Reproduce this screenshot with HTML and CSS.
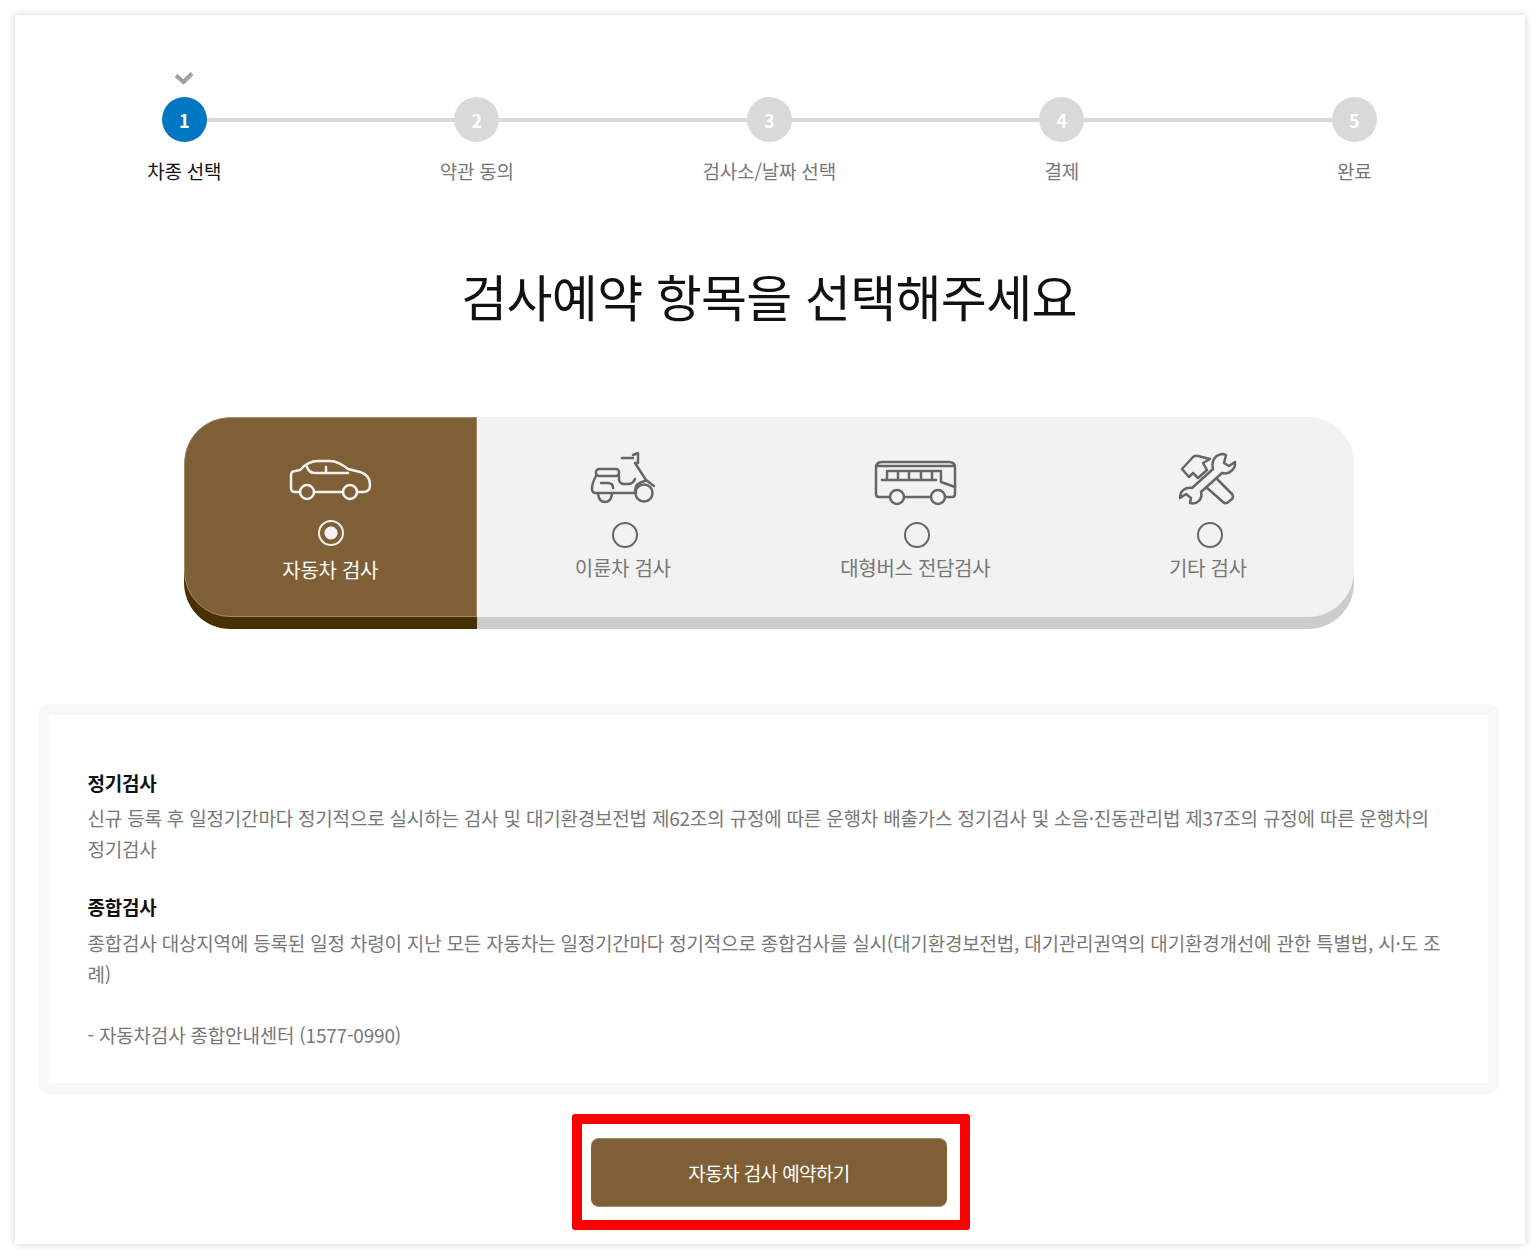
FILE: index.html
```html
<!DOCTYPE html>
<html lang="ko">
<head>
<meta charset="utf-8">
<title>검사예약</title>
<link rel="stylesheet" href="styles.css">
</head>
<body>
<main class="panel">
  <ol class="steps">
    <li class="step current">
      <svg class="check" viewBox="0 0 20 14" aria-hidden="true"><path d="M2 4.5l7.5 6.5 8.5-8.5"/></svg>
      <span class="num">1</span><span class="name">차종 선택</span>
    </li>
    <li class="step"><span class="num">2</span><span class="name">약관 동의</span></li>
    <li class="step"><span class="num">3</span><span class="name">검사소/날짜 선택</span></li>
    <li class="step"><span class="num">4</span><span class="name">결제</span></li>
    <li class="step"><span class="num">5</span><span class="name">완료</span></li>
  </ol>

  <h1 class="title">검사예약 항목을 선택해주세요</h1>

  <div class="tabs">
    <div class="tab active">
      <svg class="ico" viewBox="0 0 100 70" aria-hidden="true">
        <circle cx="27" cy="47" r="7"/><circle cx="70" cy="47" r="7"/>
        <path d="M20 47H15Q11 47 11 43V31Q11 26 15 26L20 25Q28 16 38 16H50Q58 16 68 24L80 27Q90 30 90 40Q90 47 83 47H77M34 47H63"/>
        <path d="M27 22Q29 28 35 28H68M46 22V27"/>
      </svg>
      <span class="radio on"></span>
      <span class="tab-label">자동차 검사</span>
    </div>
    <div class="tab">
      <svg class="ico scooter" viewBox="0 0 100 70" aria-hidden="true">
        <circle cx="69" cy="48" r="8.5"/>
        <path d="M23 49Q24 57 30 57Q36 57 37 49"/>
        <rect x="21" y="24" width="23" height="7" rx="3"/>
        <path d="M21 31Q17 38 17 44Q17 48 21 48H61M44 31V35Q45 39 49 39H53Q58 39 60 34"/>
        <path d="M26 38H33Q38 38 38 43"/>
        <path d="M47 13H58M58 10L63 8V18H60M60 18L71 35L79 41M60 46Q60 38 70 36"/>
      </svg>
      <span class="radio"></span>
      <span class="tab-label">이륜차 검사</span>
    </div>
    <div class="tab">
      <svg class="ico" viewBox="0 0 100 70" aria-hidden="true">
        <circle cx="32" cy="52" r="7"/><circle cx="73" cy="52" r="7"/>
        <path d="M25 52H14Q11 52 11 49V23Q11 17 17 17H84Q90 17 90 23V49Q90 52 87 52H80M39 52H66"/>
        <path d="M11 21H90M17 35H71M22 26H75M22 26V35M33 26V35M44 26V35M56 26V35M67 26V35M76 26V37L90 42"/>
      </svg>
      <span class="radio"></span>
      <span class="tab-label">대형버스 전담검사</span>
    </div>
    <div class="tab">
      <svg class="ico tools" viewBox="0 0 100 70" aria-hidden="true">
        <path d="M17 24L28 12Q30 10 33 11L45 14L38 18L42 25L33 33L28 28L24 32Z"/>
        <path d="M52 34L67 49Q69 52 67 54L62 58Q60 59 58 57L41 42"/>
        <path d="M59 9C50 9 46 16 48 24L27 43C20 42 15 46 15 53L21 49L26 53L25 58C32 60 38 54 36 47L57 28C65 30 71 23 70 17L64 21L59 18L61 10Z"/>
      </svg>
      <span class="radio"></span>
      <span class="tab-label">기타 검사</span>
    </div>
  </div>

  <section class="info">
    <h2 class="info-head">정기검사</h2>
    <p class="info-text">신규 등록 후 일정기간마다 정기적으로 실시하는 검사 및 대기환경보전법 제62조의 규정에 따른 운행차 배출가스 정기검사 및 소음·진동관리법 제37조의 규정에 따른 운행차의 정기검사</p>
    <h2 class="info-head second">종합검사</h2>
    <p class="info-text">종합검사 대상지역에 등록된 일정 차령이 지난 모든 자동차는 일정기간마다 정기적으로 종합검사를 실시(대기환경보전법, 대기관리권역의 대기환경개선에 관한 특별법, 시·도 조례)</p>
    <p class="info-text contact">- 자동차검사 종합안내센터 (1577-0990)</p>
  </section>

  <div class="cta">
    <div class="highlight"><button class="reserve" type="button">자동차 검사 예약하기</button></div>
  </div>
</main>
</body>
</html>
```

FILE: styles.css
```css
* { box-sizing: border-box; }
html, body { margin: 0; padding: 0; }
body {
  background: #fff;
  font-family: "Noto Sans CJK KR", "Noto Sans", sans-serif;
  color: #666;
}
.panel {
  width: 1510px;
  height: 1229px;
  margin: 15px;
  padding: 47px 23px 0;
  background: #fff;
  box-shadow: 0 0 8px rgba(0, 0, 0, .18);
}
.steps {
  display: flex;
  list-style: none;
  margin: 0;
  padding: 0;
  height: 135px;
}
.step {
  position: relative;
  flex: 0 0 292.5px;
  display: flex;
  flex-direction: column;
  align-items: center;
  padding-top: 35px;
}
.step:not(:last-child)::after {
  content: "";
  position: absolute;
  top: 56px;
  left: 146px;
  width: 292.5px;
  height: 4px;
  background: #d9d9d9;
}
.num {
  position: relative;
  z-index: 1;
  width: 45px;
  height: 45px;
  border-radius: 50%;
  background: #d9d9d9;
  color: #fff;
  font-weight: 700;
  font-size: 18px;
  line-height: 47px;
  text-align: center;
}
.current .num { background: #0077c2; }
.name {
  margin-top: 14px;
  font-size: 19px;
  line-height: 30px;
  color: #777;
  letter-spacing: -.2px;
}
.current .name { color: #111; }
.check {
  position: absolute;
  top: 9px;
  left: 136px;
  width: 20px;
  height: 14px;
  fill: none;
  stroke: #a0a0a0;
  stroke-width: 4.2;
}
.title {
  margin: 58px 0 0;
  padding-right: 2px;
  font-size: 50px;
  font-weight: 400;
  line-height: 80px;
  text-align: center;
  color: #111;
  letter-spacing: -.7px;
}
.tabs {
  display: flex;
  width: 1170px;
  height: 212px;
  margin: 82px 0 0 146px;
  background: #f2f2f2;
  border-radius: 46px;
  box-shadow: inset 0 -12px 0 #ccc;
  overflow: hidden;
}
.tab {
  flex: 0 0 292.5px;
  display: flex;
  flex-direction: column;
  align-items: center;
  padding-top: 28px;
}
.ico {
  width: 100px;
  height: 70px;
  fill: none;
  stroke: #666;
  stroke-width: 2.5;
  stroke-linejoin: round;
  stroke-linecap: round;
}
.scooter { margin-left: 4px; }
.tools { margin-left: 14px; }
.radio {
  width: 26px;
  height: 26px;
  margin: 7px 0 0 4px;
  border-radius: 50%;
  border: 2px solid #666;
}
.tab-label {
  font-size: 20px;
  line-height: 40px;
  color: #777;
  letter-spacing: -.3px;
}
.tab.active {
  height: 200px;
  background: #7f5f35;
  border: 1px solid #a38a68;
  border-radius: 46px 0 0 46px;
  box-shadow: 0 12px 0 #473002;
}
.tab.active .ico { stroke: #f2f2f2; margin-top: -1px; }
.tab.active .radio {
  margin: 5px 0 0 2px;
  border-color: #f2f2f2;
  background: radial-gradient(circle, #f2f2f2 0 6px, transparent 7px);
}
.tab.active .tab-label { margin-top: 4px; color: #fff; }
.info {
  width: 1461px;
  height: 390px;
  margin-top: 75px;
  padding: 53px 38px 0 38.5px;
  border: 11px solid #f8f8f8;
  border-radius: 10px;
  background-clip: padding-box;
}
.info-head {
  margin: 0;
  font-size: 19px;
  font-weight: 700;
  line-height: 30px;
  color: #111;
  letter-spacing: -.2px;
}
.info-head.second { margin-top: 28px; }
.info-text {
  margin: 4px 0 0;
  font-size: 19px;
  line-height: 31px;
  color: #777;
  letter-spacing: -.2px;
}
.info-head.second + .info-text { margin-top: 5px; }
.info-text.contact { margin-top: 30px; }
.cta {
  display: flex;
  justify-content: center;
  margin-top: 20px;
  padding-left: 2px;
}
.highlight {
  width: 398px;
  height: 116px;
  padding: 14px 9px 13px;
  border: 10px solid #f00;
  border-radius: 3px;
}
.reserve {
  display: block;
  width: 356px;
  height: 69px;
  border: 0;
  border-top: 1px solid #a38a68;
  border-bottom: 1px solid #a38a68;
  border-radius: 8px;
  background: #7f5f35;
  color: #fff;
  font: inherit;
  font-size: 19px;
  letter-spacing: -.6px;
}
```
